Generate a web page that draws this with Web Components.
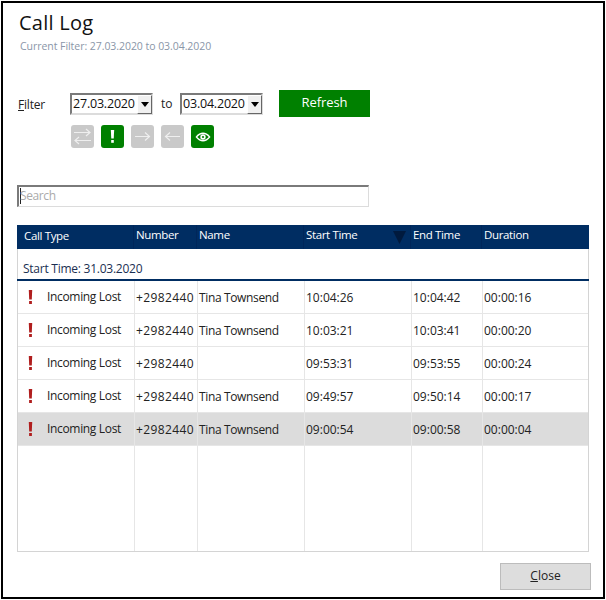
<!DOCTYPE html>
<html><head><meta charset="utf-8"><style>
html,body{margin:0;padding:0;background:#fff}
body{font:12px "Open Sans","Noto Sans",sans-serif;color:#222}
</style></head><body>
<call-log-window>
  <date-filter from="27.03.2020" to="03.04.2020"></date-filter>
  <log-table>
    <log-row type="Incoming Lost" number="+2982440" name="Tina Townsend" start="10:04:26" end="10:04:42" dur="00:00:16"></log-row>
    <log-row type="Incoming Lost" number="+2982440" name="Tina Townsend" start="10:03:21" end="10:03:41" dur="00:00:20"></log-row>
    <log-row type="Incoming Lost" number="+2982440" name="" start="09:53:31" end="09:53:55" dur="00:00:24"></log-row>
    <log-row type="Incoming Lost" number="+2982440" name="Tina Townsend" start="09:49:57" end="09:50:14" dur="00:00:17"></log-row>
    <log-row selected type="Incoming Lost" number="+2982440" name="Tina Townsend" start="09:00:54" end="09:00:58" dur="00:00:04"></log-row>
  </log-table>
</call-log-window>
<script>
const FONT='"Open Sans","Noto Sans",sans-serif';
const COLS='117px 63px 107px 107px 71px 1fr';
function def(name,html){
  customElements.define(name,class extends HTMLElement{
    constructor(){super();this.attachShadow({mode:'open'}).innerHTML=typeof html==='function'?html(this):html;}
  });
}
def('combo-date',`<style>
:host{display:flex;width:83px;height:22px;box-sizing:border-box;border:2px solid #7a7a7a;border-right-color:#dcdcdc;border-bottom-color:#dcdcdc;background:#fff;font:12.5px/18px ${FONT};color:#111}
span{flex:1;padding-left:1px;white-space:nowrap;overflow:hidden;letter-spacing:-.2px}
b{width:15px;height:19px;box-sizing:border-box;background:#f0f0f0;border:1px solid #fff;border-right-color:#666;border-bottom-color:#666;display:flex;align-items:center;justify-content:center;margin-right:-1px}
svg{display:block}
</style><span><slot></slot></span><b><svg width="8" height="5"><path d="M0 0h8L4 5z" fill="#000"/></svg></b>`);
def('icon-btn',`<style>
:host{display:flex;width:23px;height:23px;border-radius:3px;background:#c9c9c9;align-items:center;justify-content:center}
:host([on]){background:#008000}
svg{display:block}
</style><slot></slot>`);
def('date-filter',h=>`<style>
:host{display:block;margin-top:37px;font:12px ${FONT}}
.r{display:flex;align-items:center;height:27px}
.l{width:52px;position:relative;top:1px;color:#222;letter-spacing:-.2px}
u{text-decoration:underline}
.to{width:27px;padding-left:8px;box-sizing:border-box;color:#222}
.refresh{width:91px;height:27px;margin-left:16px;background:#008000;color:#fff;display:flex;align-items:center;justify-content:center;font-size:13px;letter-spacing:-.1px;padding-bottom:3px;box-sizing:border-box}
.i{display:flex;gap:7px;margin:8px 0 0 53px}
.s{margin-top:37px;height:22px;width:352px;margin-left:-1px;box-sizing:border-box;border:2px solid #7a7a7a;border-right:1px solid #dcdcdc;border-bottom:1px solid #dcdcdc;color:#aaa;line-height:18px;display:flex;letter-spacing:-.4px}
.s i{width:1px;height:16px;background:#222;margin:1px 0 0 1px}
.s span{margin-left:-1px}
</style>
<div class="r"><span class="l"><u>F</u>ilter</span><combo-date>${h.getAttribute('from')}</combo-date><span class="to">to</span><combo-date>${h.getAttribute('to')}</combo-date><span class="refresh">Refresh</span></div>
<div class="i">
<icon-btn><svg width="19" height="19" fill="none" stroke="#fff" stroke-opacity=".7" stroke-width="1.200"><path d="M1 5.500h16M13 2l4 3.500-4 3.500M18 13.500H2M6 10l-4 3.500L6 17"/></svg></icon-btn>
<icon-btn on><svg width="5" height="15" fill="#fff"><path d="M.8 1h3.400l-.5 8.500H1.300z"/><rect x="1.200" y="11" width="2.600" height="2.800"/></svg></icon-btn>
<icon-btn><svg width="17" height="11" fill="none" stroke="#fff" stroke-opacity=".7" stroke-width="1.200"><path d="M1 5.500h14M11 1.500l4.500 4-4.500 4"/></svg></icon-btn>
<icon-btn><svg width="17" height="11" fill="none" stroke="#fff" stroke-opacity=".7" stroke-width="1.200"><path d="M16 5.500H2M6 1.500l-4.500 4 4.500 4"/></svg></icon-btn>
<icon-btn on><svg width="16" height="10"><path d="M.5 5C3 1.800 5.500.6 8 .6S13 1.800 15.500 5C13 8.200 10.500 9.400 8 9.400S3 8.200.5 5z" fill="#fff"/><path d="M2.300 5C4 3.100 6 2 8 2s4 1.100 5.700 3C12 6.900 10 8 8 8S4 6.900 2.300 5z" fill="#008000"/><circle cx="8" cy="5" r="2.700" fill="#fff"/><circle cx="8" cy="5" r="1.100" fill="#008000"/></svg></icon-btn>
</div>
<div class="s"><i></i><span>Search</span></div>`);
def('log-row',h=>{const a=n=>h.getAttribute(n)||'';return `<style>
:host{display:grid;grid-template-columns:${COLS};height:33px;box-sizing:border-box;border-bottom:1px solid #e6e6e6;font:12px/34px ${FONT};color:#222}
:host([selected]){background:#dcdcdc}
div{border-right:1px solid #e6e6e6;padding-left:1px;white-space:nowrap;overflow:hidden;min-width:0}
div:last-child{border-right:0}
.t{display:flex;align-items:center;padding-left:10px;gap:13px;letter-spacing:-.33px}
.n{letter-spacing:.38px}
.c{letter-spacing:-.36px;padding-left:1px}
svg{display:block;flex:none}
</style>
<div class="t"><svg width="6" height="14" fill="#b01e1e"><path d="M.8 0h3.400l-.4 9.500H1.200z"/><rect x="1.100" y="11" width="2.800" height="3"/></svg><span>${a('type')}</span></div>
<div class="n">${a('number')}</div><div class="c">${a('name')}</div><div>${a('start')}</div><div>${a('end')}</div><div>${a('dur')}</div>`});
def('log-table',`<style>
:host{display:flex;flex-direction:column;height:327px;margin:18px 0 0 -1px;width:572px;box-sizing:border-box;border:1px solid #d4d4d4;border-top:0;font:12px ${FONT}}
.h{display:grid;grid-template-columns:${COLS};height:24px;background:#002d62;color:#fff;margin:0 -1px;flex:none;font-size:11.500px;line-height:20px;letter-spacing:-.35px}
.h div{border-right:1px solid #00265a;padding-left:2px;white-space:nowrap;position:relative}
.h div:last-child{border-right:0}
.h .first{padding-left:7px;line-height:22px;font-size:11.500px}
.h svg{position:absolute;right:4px;top:6px}
.g{box-sizing:border-box;flex:none;padding:11px 0 0 6px;border-bottom:2px solid #002d62;color:#1a2f52;line-height:18px;height:32px;margin:0 -1px;letter-spacing:-.25px}
.f{flex:1;display:grid;grid-template-columns:${COLS}}
.f i{border-right:1px solid #e6e6e6}
.f i:last-child{border-right:0}
</style>
<div class="h"><div class="first">Call Type</div><div>Number</div><div>Name</div><div>Start Time<svg width="13" height="13"><path d="M0 0h13L6.500 13z" fill="#001a3e"/></svg></div><div>End Time</div><div>Duration</div></div>
<div class="g">Start Time: 31.03.2020</div>
<slot></slot>
<div class="f"><i></i><i></i><i></i><i></i><i></i><i></i></div>`);
def('call-log-window',`<style>
:host{display:flex;flex-direction:column;width:604px;height:598px;margin:1px;box-sizing:border-box;border:2px solid #000;padding:6px 0 0 15px;background:#fff;font:12px ${FONT}}
h1{margin:0 0 0 1px;font:400 20px/28px ${FONT};letter-spacing:.25px;color:#111}
.sub{margin:2px 0 0 2px;font-size:10.500px;line-height:14px;letter-spacing:-.05px;color:#8a96a8}
.foot{display:flex;justify-content:flex-end;margin:11px 12px 0 0}
.close{width:91px;height:27px;box-sizing:border-box;background:#ddd;border:1px solid #bcbcbc;color:#222;text-align:center;line-height:23px;font-size:12px}
u{text-decoration:underline}
</style>
<h1>Call Log</h1>
<div class="sub">Current Filter: 27.03.2020 to 03.04.2020</div>
<slot></slot>
<div class="foot"><div class="close"><u>C</u>lose</div></div>`);
</script>
</body></html>
